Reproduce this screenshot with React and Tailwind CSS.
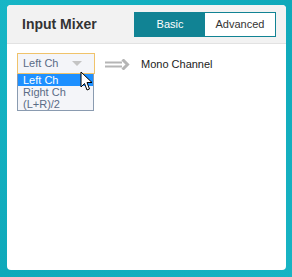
import React from 'react';

const App = () => {
  return (
    <div
      className="w-[292px] h-[277px] bg-gradient-to-br from-[#17b6c6] via-[#0fa9ba] to-[#18b4c4] pt-[5px] pl-[7px]"
      style={{ fontFamily: '"Liberation Sans", Arial, sans-serif' }}
    >
      <div className="w-[279px] h-[265px] bg-white rounded-[4px] overflow-hidden flex flex-col">
        {/* header */}
        <div className="h-[39px] bg-[#f2f2f2] border-b border-[#e2e2e2] flex items-center justify-between pl-[15px] pr-[10px] shrink-0">
          <span className="text-[14px] font-bold text-[#333]">Input Mixer</span>
          <div className="flex h-[25px] border border-[#118394]">
            <button className="w-[70px] bg-[#118394] text-white text-[11px]">Basic</button>
            <button className="w-[70px] bg-white text-[#333] text-[11px]">Advanced</button>
          </div>
        </div>

        {/* body */}
        <div className="flex items-start pl-[10px] pt-[9px]">
          <div className="relative">
            <div className="w-[78px] h-[21px] border border-[#f0c36b] bg-[#f4f5f9] flex items-center justify-between pl-[5px] pr-[12px] text-[11px] text-[#5a6b86]">
              <span>Left Ch</span>
              <svg width="10" height="6" viewBox="0 0 10 6">
                <path d="M0 0 L10 0 L5 5 Z" fill="#c4c4c4" />
              </svg>
            </div>
            <div className="w-[77px] border border-[#8a9bb0] border-t-0 bg-[#f4f5f9] text-[11px] leading-[12px] text-[#5a6b86]">
              <div className="bg-[#1e90ff] text-white pl-[5px] h-[12px]">Left Ch</div>
              <div className="pl-[5px] h-[12px]">Right Ch</div>
              <div className="pl-[5px] h-[12px]">(L+R)/2</div>
            </div>
            {/* cursor */}
            <svg
              className="absolute left-[63px] top-[18px]"
              width="14"
              height="21"
              viewBox="0 0 14 21"
            >
              <path
                d="M1 1 L1 16 L4.5 12.5 L7 19 L9.5 18 L7 11.5 L12 11.5 Z"
                fill="white"
                stroke="black"
                strokeWidth="1"
                strokeLinejoin="round"
              />
            </svg>
          </div>

          <div className="flex items-center h-[21px] ml-[10px] mt-[1px]">
            <svg width="25" height="11" viewBox="0 0 25 11">
              <rect x="0" y="2.5" width="17" height="2" fill="#b5b5b5" />
              <rect x="0" y="6.5" width="17" height="2" fill="#b5b5b5" />
              <path d="M17.5 0.5 L22.5 5.5 L17.5 10.5" fill="none" stroke="#b5b5b5" strokeWidth="3" />
            </svg>
            <span className="ml-[11px] text-[11px] text-[#222]">Mono Channel</span>
          </div>
        </div>
      </div>
    </div>
  );
};

export default App;
